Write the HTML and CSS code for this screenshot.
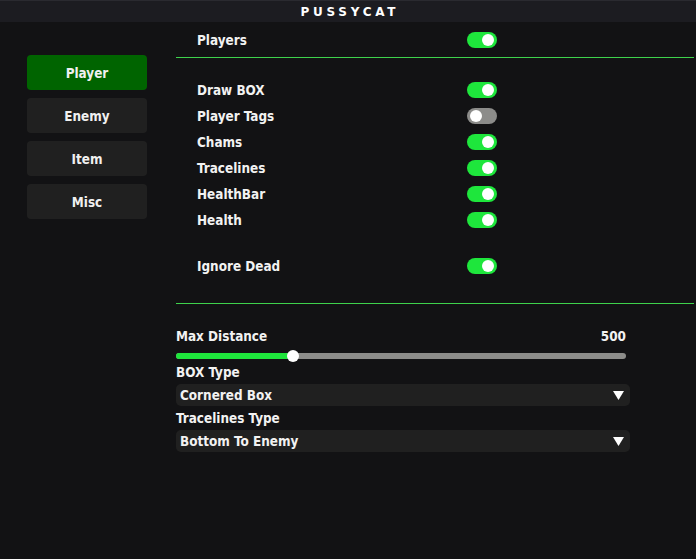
FILE: index.html
```html
<!DOCTYPE html>
<html>
<head>
<meta charset="utf-8">
<link rel="stylesheet" href="styles.css">
</head>
<body>
<div class="window">
  <div class="titlebar"><span class="title">PUSSYCAT</span></div>
  <div class="main">
    <div class="sidebar">
      <div class="tab active">Player</div>
      <div class="tab">Enemy</div>
      <div class="tab">Item</div>
      <div class="tab">Misc</div>
    </div>
    <div class="content">
      <div class="row first"><span class="label">Players</span><span class="toggle on"></span></div>
      <div class="divider d1"></div>
      <div class="group">
        <div class="row"><span class="label">Draw BOX</span><span class="toggle on"></span></div>
        <div class="row"><span class="label">Player Tags</span><span class="toggle off"></span></div>
        <div class="row"><span class="label">Chams</span><span class="toggle on"></span></div>
        <div class="row"><span class="label">Tracelines</span><span class="toggle on"></span></div>
        <div class="row"><span class="label">HealthBar</span><span class="toggle on"></span></div>
        <div class="row"><span class="label">Health</span><span class="toggle on"></span></div>
      </div>
      <div class="row gapped"><span class="label">Ignore Dead</span><span class="toggle on"></span></div>
      <div class="divider d2"></div>
      <div class="settings">
        <div class="slider-head"><span>Max Distance</span><span>500</span></div>
        <div class="slider">
          <div class="fill" style="width:26%"></div>
          <div class="knob" style="left:26%"></div>
        </div>
        <div class="field-label">BOX Type</div>
        <div class="dropdown"><span>Cornered Box</span><svg class="arrow" width="11" height="9" viewBox="0 0 11 9"><polygon points="0,0 11,0 5.5,9" fill="#ffffff"/></svg></div>
        <div class="field-label second">Tracelines Type</div>
        <div class="dropdown"><span>Bottom To Enemy</span><svg class="arrow" width="11" height="9" viewBox="0 0 11 9"><polygon points="0,0 11,0 5.5,9" fill="#ffffff"/></svg></div>
      </div>
    </div>
  </div>
</div>
</body>
</html>
```

FILE: styles.css
```css
* { box-sizing: border-box; }
html, body {
  margin: 0;
  padding: 0;
  background: #121214;
  width: 696px;
  height: 559px;
  overflow: hidden;
}
body {
  font-family: "DejaVu Sans Condensed", "DejaVu Sans", sans-serif;
  font-weight: bold;
  font-size: 13.4px;
  color: #f2f2f2;
}
.window { width: 696px; height: 559px; }
.titlebar {
  height: 22px;
  background: #1c1c21;
  border-top: 1px solid #2a2a30;
  display: flex;
  align-items: center;
  justify-content: center;
}
.title {
  font-family: "DejaVu Sans", sans-serif;
  font-size: 12px;
  font-weight: bold;
  letter-spacing: 3.7px;
  margin-right: -3.7px;
  color: #ffffff;
}
.main { display: flex; }
.sidebar {
  width: 176px;
  padding: 33px 0 0 27px;
  display: flex;
  flex-direction: column;
  gap: 8px;
}
.tab {
  width: 120px;
  height: 35px;
  border-radius: 4px;
  background: #202020;
  display: flex;
  align-items: center;
  justify-content: center;
  padding-top: 2px;
  color: #f0f0f0;
}
.tab.active { background: #006400; }
.content {
  width: 518px;
  padding-top: 5px;
}
.row {
  display: grid;
  grid-template-columns: 270px 30px;
  align-items: center;
  height: 26px;
  padding-left: 21px;
}
.toggle {
  position: relative;
  width: 30px;
  height: 16px;
  border-radius: 8px;
  background: #1ee63c;
}
.toggle::after {
  content: "";
  position: absolute;
  top: 2px;
  width: 12px;
  height: 12px;
  border-radius: 50%;
  background: #ffffff;
}
.toggle.on::after { right: 3px; }
.toggle.off { background: #8c8c8a; }
.toggle.off::after { left: 3px; }
.divider { height: 1px; background: #3ed24c; }
.d1 { margin-top: 4px; margin-bottom: 19px; }
.gapped { margin-top: 20px; }
.d2 { margin-top: 24px; }
.settings { width: 454px; padding-top: 25px; }
.slider-head {
  width: 450px;
  display: flex;
  justify-content: space-between;
  height: 16px;
  line-height: 16px;
}
.slider {
  position: relative;
  width: 450px;
  height: 6px;
  margin-top: 8px;
  border-radius: 3px;
  background: #8c8c8a;
}
.fill {
  height: 6px;
  border-radius: 3px 0 0 3px;
  background: #1ee63c;
}
.knob {
  position: absolute;
  top: -3px;
  width: 12px;
  height: 12px;
  margin-left: -6px;
  border-radius: 50%;
  background: #ffffff;
}
.field-label {
  height: 16px;
  line-height: 16px;
  margin-top: 6px;
}
.field-label.second { margin-top: 5px; }
.dropdown {
  height: 22px;
  margin-top: 3px;
  border-radius: 5px;
  background: #202020;
  display: flex;
  align-items: center;
  justify-content: space-between;
  padding: 0 6px 0 4px;
}
.arrow { display: block; }
```
